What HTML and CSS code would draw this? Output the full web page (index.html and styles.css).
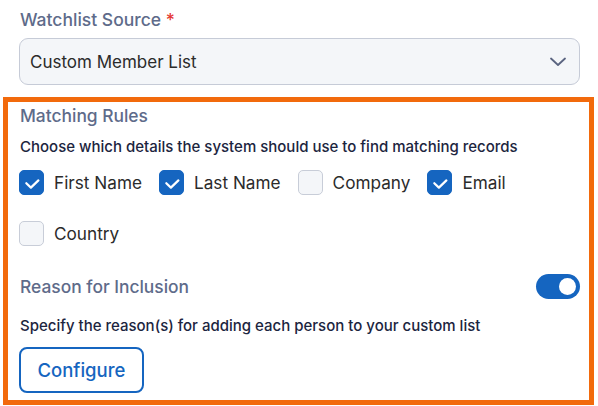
FILE: index.html
```html
<!DOCTYPE html>
<html lang="en">
<head>
<meta charset="utf-8">
<link rel="stylesheet" href="styles.css">
</head>
<body>
<div class="page">
  <div class="field">
    <div class="label">Watchlist Source <span class="req">*</span></div>
    <div class="select">
      <span class="select-value">Custom Member List</span>
      <svg class="chevron" width="16" height="10" viewBox="0 0 16 10"><path d="M1 1.5l7 6.5 7-6.5" fill="none" stroke="#5a6480" stroke-width="1.8" stroke-linecap="round" stroke-linejoin="round"/></svg>
    </div>
  </div>
  <div class="highlight">
    <div class="section-title">Matching Rules</div>
    <div class="desc desc-1">Choose which details the system should use to find matching records</div>
    <div class="checks">
      <label class="check"><span class="box on"><svg width="25" height="25" viewBox="0 0 25 25"><path d="M7.3 13.2l4.6 4.4 7.5-7.2" fill="none" stroke="#fff" stroke-width="2.2" stroke-linecap="round" stroke-linejoin="round"/></svg></span><span class="check-label">First Name</span></label>
      <label class="check"><span class="box on"><svg width="25" height="25" viewBox="0 0 25 25"><path d="M7.3 13.2l4.6 4.4 7.5-7.2" fill="none" stroke="#fff" stroke-width="2.2" stroke-linecap="round" stroke-linejoin="round"/></svg></span><span class="check-label">Last Name</span></label>
      <label class="check"><span class="box"></span><span class="check-label">Company</span></label>
      <label class="check"><span class="box on"><svg width="25" height="25" viewBox="0 0 25 25"><path d="M7.3 13.2l4.6 4.4 7.5-7.2" fill="none" stroke="#fff" stroke-width="2.2" stroke-linecap="round" stroke-linejoin="round"/></svg></span><span class="check-label">Email</span></label>
      <label class="check"><span class="box"></span><span class="check-label">Country</span></label>
    </div>
    <div class="reason-row">
      <div class="section-title">Reason for Inclusion</div>
      <div class="toggle"><span class="knob"></span></div>
    </div>
    <div class="desc desc-2">Specify the reason(s) for adding each person to your custom list</div>
    <button class="btn">Configure</button>
  </div>
</div>
</body>
</html>
```

FILE: styles.css
```css
* { box-sizing: border-box; }
html, body { margin: 0; padding: 0; background: #fff; }
body { font-family: Inter, "Noto Sans", sans-serif; }
.page { width: 598px; padding-top: 8px; }
.field { padding: 0 18px 0 19px; }
.label { font-size: 17.5px; line-height: 24px; color: #5e6b8a; font-weight: 500; padding-left: 1px; }
.req { color: #e53935; }
.select {
  margin-top: 6px;
  height: 47px;
  border: 1px solid #c6cbd7;
  border-radius: 9px;
  background: #f4f6f9;
  display: flex;
  align-items: center;
  justify-content: space-between;
  padding: 0 13px 0 10px;
}
.select-value { font-size: 17px; color: #2b2b2b; }
.chevron { display: block; }
.highlight {
  margin: 12px 4px 0 3px;
  border: 5px solid #f26a0c;
  padding: 2px 9px 7px 11px;
  display: flex;
  flex-direction: column;
  align-items: flex-start;
}
.section-title { font-size: 17.4px; line-height: 24px; color: #5e6b8a; font-weight: 500; padding-left: 1px; }
.desc { font-size: 15px; line-height: 20px; color: #1c2540; font-weight: 500; padding-left: 1px; }
.desc-1 { margin-top: 9px; }
.checks {
  margin-top: 13px;
  display: flex;
  flex-wrap: wrap;
  column-gap: 17px;
  row-gap: 26px;
  width: 100%;
}
.check { display: flex; align-items: center; gap: 10px; height: 25px; }
.box {
  width: 25px; height: 25px;
  border-radius: 5px;
  border: 1px solid #c8cdd8;
  background: #f4f6f9;
  display: block;
}
.box.on { background: #1565c0; border-color: #1565c0; }
.box svg { display: block; margin: -1px; }
.check-label { font-size: 17.2px; color: #2b2b2b; }
.reason-row {
  margin-top: 28px;
  width: 100%;
  display: flex;
  align-items: center;
  justify-content: space-between;
}
.toggle {
  width: 44px; height: 25px;
  border-radius: 13px;
  background: #1565c0;
  display: flex;
  align-items: center;
  justify-content: flex-end;
  padding-right: 4px;
}
.knob { width: 17px; height: 17px; border-radius: 50%; background: #fff; display: block; }
.desc-2 { margin-top: 17px; }
.btn {
  margin-top: 11px;
  height: 46px;
  padding: 0 16.5px;
  border: 2px solid #1565c0;
  border-radius: 8px;
  background: #fff;
  color: #1565c0;
  font-family: Inter, "Noto Sans", sans-serif;
  font-size: 18.5px;
  font-weight: 500;
}
```
